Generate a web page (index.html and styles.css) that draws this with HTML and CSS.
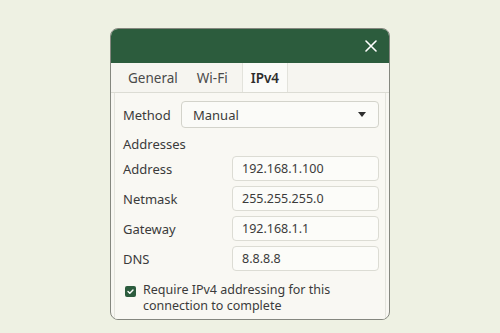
FILE: index.html
```html
<!DOCTYPE html>
<html lang="en">
<head>
    <meta charset="UTF-8">
    <title>IPv4 Settings</title>
    <link rel="stylesheet" href="styles.css">
</head>
<body>
    <div class="dialog">
        <div class="header">
            <button class="close" aria-label="Close">
                <svg width="12" height="12" viewBox="0 0 12 12">
                    <path d="M1 1L11 11M11 1L1 11" stroke="#ffffff" stroke-width="1.6" stroke-linecap="round"/>
                </svg>
            </button>
        </div>

        <div class="tabs">
            <div class="tab">General</div>
            <div class="tab">Wi-Fi</div>
            <div class="tab active">IPv4</div>
        </div>

        <div class="panel">
            <div class="method-row">
                <label class="method-label">Method</label>
                <div class="select">
                    <span>Manual</span>
                    <svg width="8" height="5" viewBox="0 0 8 5"><path d="M0 0H8L4 5Z" fill="#2e2e2e"/></svg>
                </div>
            </div>

            <div class="section-title">Addresses</div>

            <div class="field">
                <label>Address</label>
                <div class="input">192.168.1.100</div>
            </div>
            <div class="field">
                <label>Netmask</label>
                <div class="input">255.255.255.0</div>
            </div>
            <div class="field">
                <label>Gateway</label>
                <div class="input">192.168.1.1</div>
            </div>
            <div class="field">
                <label>DNS</label>
                <div class="input">8.8.8.8</div>
            </div>

            <div class="check-row">
                <span class="checkbox">
                    <svg width="11" height="11" viewBox="0 0 11 11">
                        <path d="M3 5.6L4.8 7.3L8 3.9" stroke="#ffffff" stroke-width="1.4" fill="none" stroke-linecap="round" stroke-linejoin="round"/>
                    </svg>
                </span>
                <span class="check-text">Require IPv4 addressing for this connection to complete</span>
            </div>
        </div>
    </div>
</body>
</html>
```

FILE: styles.css
```css
body {
    margin: 0;
    background-color: #eef1e3;
    font-family: "Noto Sans", "DejaVu Sans", sans-serif;
    color: #3b3b3b;
}
.dialog {
    width: 278px;
    margin: 28px 0 0 110px;
    background-color: #f8f7f2;
    border: 1px solid #85877f;
    border-radius: 8px;
    overflow: hidden;
}
.header {
    height: 34px;
    background-color: #2c5c3d;
    display: flex;
    justify-content: flex-end;
    align-items: center;
    padding-right: 12px;
}
.close {
    background: none;
    border: none;
    padding: 0;
    width: 12px;
    height: 12px;
    display: flex;
}
.tabs {
    display: flex;
    height: 29px;
    padding-left: 9px;
    border-bottom: 1px solid #dcdcd4;
    background-color: #f6f5f0;
}
.tab {
    font-size: 13.5px;
    line-height: 30px;
    padding: 0 8px;
    color: #4a4a4a;
}
.tab + .tab {
    margin-left: 3px;
}
.tab.active {
    font-weight: 600;
    color: #2e2e2e;
    background-color: #fbfbf8;
    border-left: 1px solid #e3e3dc;
    border-right: 1px solid #e3e3dc;
    margin-left: 6px;
    padding: 0 8px;
}
.panel {
    margin: 0 3px;
    padding: 8px 6px 5px 8px;
    border-left: 1px solid #e4e4dd;
    border-right: 1px solid #e4e4dd;
    background-color: #f9f8f3;
}
.method-row {
    display: flex;
    align-items: center;
}
.method-label {
    width: 58px;
    font-size: 13px;
}
.select {
    flex: 1;
    height: 25px;
    border: 1px solid #d3d3cb;
    border-radius: 4px;
    background-color: #fbfbf8;
    display: flex;
    align-items: center;
    justify-content: space-between;
    padding: 0 12px 0 11px;
    font-size: 13px;
}
.section-title {
    font-size: 13px;
    margin: 8px 0 3px 0;
    line-height: 17px;
}
.field {
    display: flex;
    align-items: center;
    margin-bottom: 5px;
}
.field label {
    width: 109px;
    font-size: 13px;
}
.input {
    flex: 1;
    height: 23px;
    line-height: 23px;
    border: 1px solid #dcdcd4;
    border-radius: 4px;
    background-color: #fcfcf9;
    padding-left: 9px;
    font-size: 12.5px;
}
.check-row {
    display: flex;
    align-items: flex-start;
    margin-top: 11px;
}
.checkbox {
    flex: none;
    width: 11px;
    height: 11px;
    border-radius: 2px;
    background-color: #2c5c3d;
    margin: 4px 7px 0 2px;
    display: flex;
}
.check-text {
    font-size: 12.5px;
    line-height: 16px;
    width: 200px;
}
```
